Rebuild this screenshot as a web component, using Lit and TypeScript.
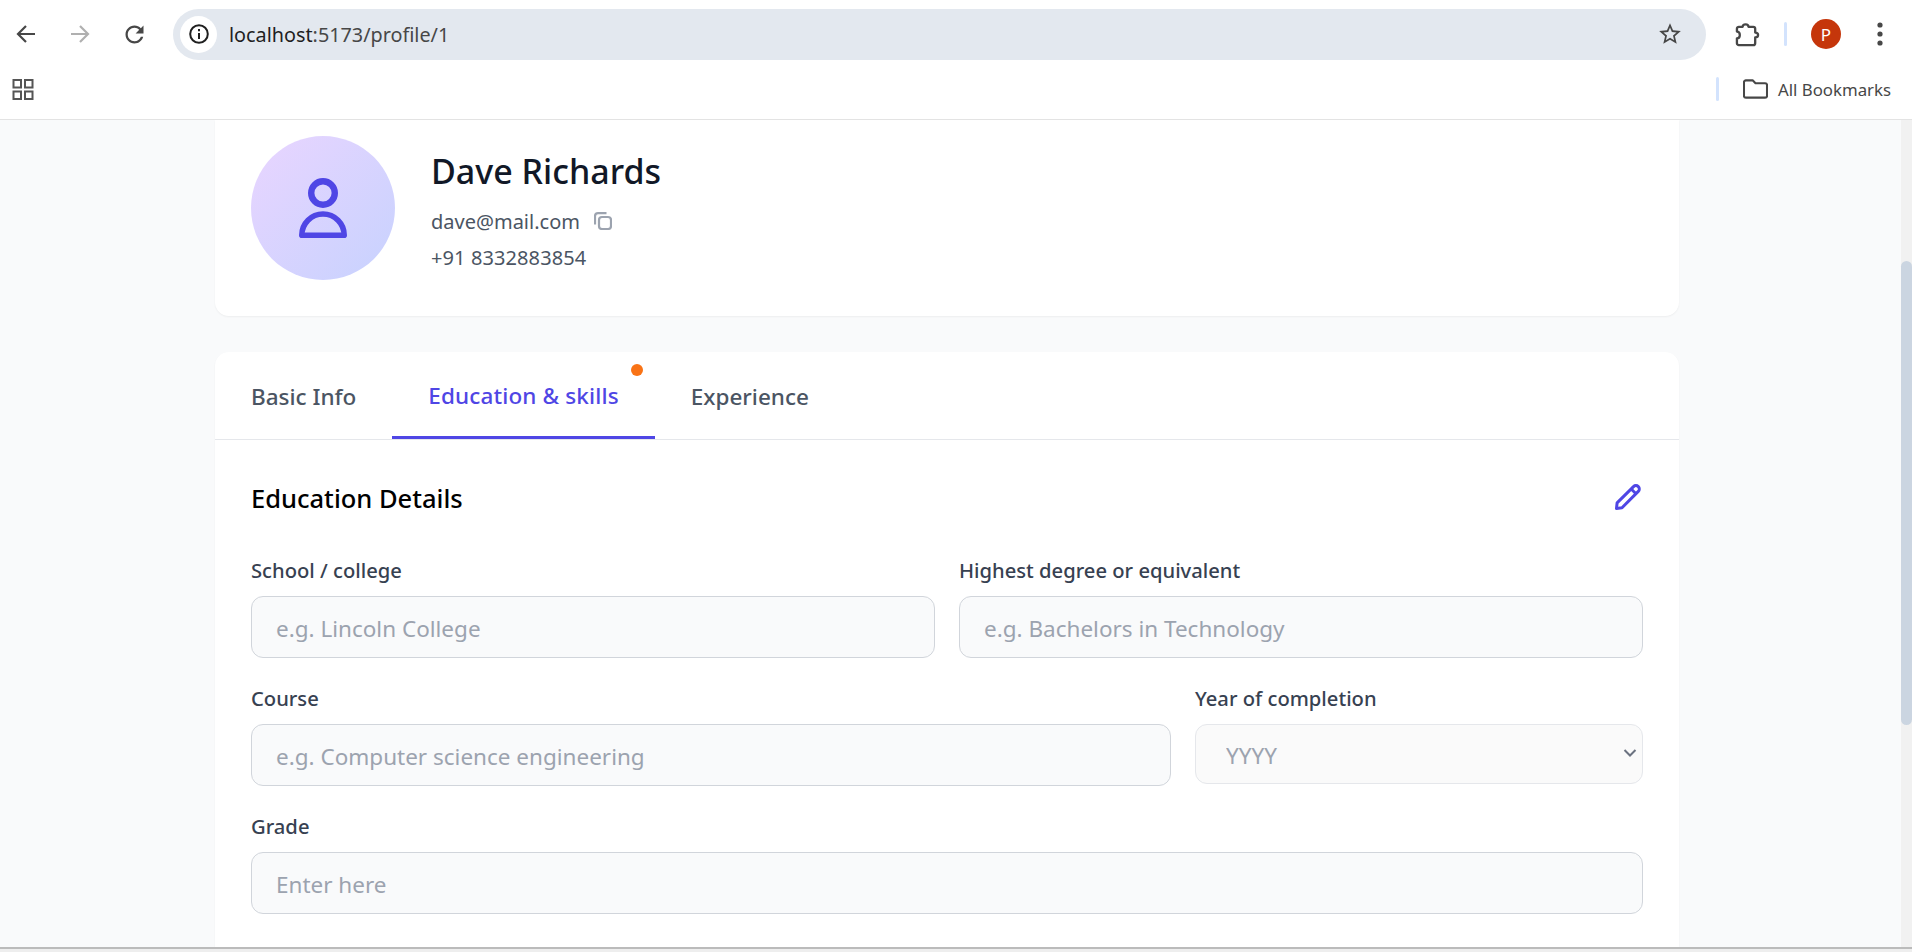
import { LitElement, html, css } from 'lit';
import { customElement, state } from 'lit/decorators.js';

interface Field {
  label: string;
  placeholder: string;
  span: number;
}

@customElement('app-root')
export class AppRoot extends LitElement {
  @state() private activeTab = 'Education & skills';

  private tabs = ['Basic Info', 'Education & skills', 'Experience'];

  private fields: Field[] = [
    { label: 'School / college', placeholder: 'e.g. Lincoln College', span: 3 },
    { label: 'Highest degree or equivalent', placeholder: 'e.g. Bachelors in Technology', span: 3 },
    { label: 'Course', placeholder: 'e.g. Computer science engineering', span: 4 },
  ];

  static styles = css`
    :host {
      display: flex;
      flex-direction: column;
      width: 1912px;
      height: 952px;
      overflow: hidden;
      font-family: 'Noto Sans', 'Open Sans', sans-serif;
      background: #fff;
    }
    svg { display: block; flex: none; }

    /* browser chrome */
    .toolbar {
      display: flex;
      align-items: center;
      height: 68px;
      flex: none;
    }
    .nav-btn {
      width: 52px;
      margin-left: 2px;
      display: flex;
      justify-content: center;
    }
    .nav-btn:first-child { margin-left: 0; }
    .omnibox {
      display: flex;
      align-items: center;
      width: 1533px;
      height: 51px;
      margin-left: 13px;
      border-radius: 26px;
      background: #e3e8ef;
      flex: none;
    }
    .site-info {
      width: 37px;
      height: 37px;
      margin-left: 7px;
      border-radius: 50%;
      background: #fff;
      display: flex;
      align-items: center;
      justify-content: center;
    }
    .url {
      margin-left: 12px;
      font-size: 19.8px;
      color: #474747;
      flex: 1;
    }
    .url b { font-weight: 400; color: #1f1f1f; }
    .star { margin-right: 23px; }
    .ext { margin-left: 29px; }
    .sep {
      width: 3px;
      height: 24px;
      background: #d3e3fd;
      border-radius: 2px;
      flex: none;
    }
    .toolbar .sep { margin-left: 24px; }
    .profile {
      width: 30px;
      height: 30px;
      margin-left: 24px;
      border-radius: 50%;
      background: #c5360b;
      color: #fff;
      font-size: 17px;
      display: flex;
      align-items: center;
      justify-content: center;
    }
    .menu { margin-left: 36px; }
    .bookmarks {
      display: flex;
      align-items: center;
      height: 52px;
      flex: none;
      padding: 0 21px 9px 12px;
      box-sizing: border-box;
      border-bottom: 1px solid #e3e3e3;
    }
    .bookmarks .sep { margin-left: auto; }
    .folder { margin-left: 24px; }
    .all {
      margin-left: 10px;
      font-size: 16.8px;
      color: #474747;
    }

    /* page */
    .viewport {
      flex: 1;
      min-height: 0;
      display: flex;
      background: #f9fafb;
    }
    .page {
      flex: 1;
      min-width: 0;
      overflow: hidden;
      padding-left: 215px;
    }
    .card {
      width: 1464px;
      background: #fff;
      border-radius: 14px;
      box-shadow: 0 1px 2px rgba(0, 0, 0, 0.05);
    }
    .profile-card {
      display: flex;
      gap: 36px;
      padding: 16px 36px 36px;
      box-sizing: border-box;
      border-radius: 0 0 14px 14px;
    }
    .avatar {
      width: 144px;
      height: 144px;
      border-radius: 50%;
      background: linear-gradient(135deg, #e9d5ff, #c7d2fe);
      display: flex;
      align-items: center;
      justify-content: center;
      flex: none;
    }
    .who { padding-top: 15px; }
    .name {
      font-size: 34px;
      line-height: 40px;
      font-weight: 500;
      color: #111827;
    }
    .email {
      display: flex;
      align-items: center;
      gap: 14px;
      margin-top: 17px;
      font-size: 20px;
      line-height: 28px;
      color: #4b5563;
    }
    .email svg { margin-top: -3px; }
    .phone {
      margin-top: 8px;
      font-size: 20px;
      letter-spacing: 0.1px;
      line-height: 28px;
      color: #4b5563;
    }
    .details-card { margin-top: 36px; }
    .tabs {
      display: flex;
      height: 88px;
      box-sizing: border-box;
      border-bottom: 1px solid #e5e7eb;
    }
    .tab {
      position: relative;
      display: flex;
      align-items: center;
      padding: 2px 36px 0;
      font-size: 22.5px;
      font-weight: 500;
      color: #4b5563;
    }
    .tab.active {
      color: #4f46e5;
      letter-spacing: 0.13px;
      border-bottom: 3px solid #4f46e5;
    }
    .dot {
      position: absolute;
      top: 12px;
      right: 12px;
      width: 12px;
      height: 12px;
      border-radius: 50%;
      background: #f97316;
    }
    .body { padding: 41px 36px 60px; }
    .head {
      display: flex;
      align-items: center;
      justify-content: space-between;
      height: 34px;
      margin-bottom: 41px;
    }
    .head h2 {
      margin: 0;
      font-size: 25.5px;
      font-weight: 500;
      color: #000;
    }
    .head svg { margin: -2px 2px 0 0; }
    .grid {
      display: grid;
      grid-template-columns: repeat(6, 1fr);
      column-gap: 24px;
      row-gap: 26px;
    }
    .field label {
      display: block;
      margin-bottom: 12px;
      font-size: 20.2px;
      line-height: 28px;
      font-weight: 500;
      color: #374151;
    }
    .field input,
    .field select {
      display: block;
      width: 100%;
      box-sizing: border-box;
      height: 62px;
      padding: 2px 24px 0;
      background: #f9fafb;
      border: 1px solid #d1d5db;
      border-radius: 12px;
      font: 400 22.5px 'Noto Sans', sans-serif;
      color: #111827;
      outline: none;
    }
    .field input::placeholder { color: #9ca3af; }
    .select-wrap { position: relative; }
    .field select {
      height: 60px;
      appearance: none;
      padding-left: 30px;
      background: #fafafa;
      border-color: #e5e7eb;
      color: #9ca3af;
    }
    .chevron {
      position: absolute;
      top: 24px;
      right: 6px;
    }

    /* scrollbar */
    .scrollbar {
      width: 11px;
      flex: none;
      background: #f1f1f1;
    }
    .thumb {
      height: 464px;
      margin-top: 141px;
      border-radius: 6px;
      background: #cbd5e1;
    }
    .status {
      height: 5px;
      flex: none;
      box-sizing: border-box;
      border-top: 2px solid #bbb;
      background: #eee;
    }
  `;

  private renderToolbar() {
    return html`
      <div class="toolbar">
        <div class="nav-btn">
          <svg width="22" height="22" viewBox="0 0 22 22" fill="none" stroke="#474747" stroke-width="2.2"><path d="M20 11H3M11 3l-8 8 8 8" /></svg>
        </div>
        <div class="nav-btn">
          <svg width="22" height="22" viewBox="0 0 22 22" fill="none" stroke="#b0b0b0" stroke-width="2.2"><path d="M2 11h17M11 3l8 8-8 8" /></svg>
        </div>
        <div class="nav-btn">
          <svg width="27" height="27" viewBox="0 0 24 24" fill="#474747"><path d="M17.65 6.35C16.2 4.9 14.21 4 12 4c-4.42 0-7.99 3.58-7.99 8s3.57 8 7.99 8c3.73 0 6.84-2.55 7.73-6h-2.08c-.82 2.33-3.04 4-5.65 4-3.31 0-6-2.69-6-6s2.69-6 6-6c1.66 0 3.14.69 4.22 1.78L13 11h7V4l-2.35 2.35z" /></svg>
        </div>
        <div class="omnibox">
          <div class="site-info">
            <svg width="22" height="22" viewBox="0 0 22 22" fill="none" stroke="#1f1f1f" stroke-width="2">
              <circle cx="11" cy="11" r="8.8" />
              <path d="M11 10v6M11 6v2.2" />
            </svg>
          </div>
          <div class="url"><b>localhost</b>:5173/profile/1</div>
          <svg class="star" width="26" height="26" viewBox="0 0 24 24" fill="#474747"><path d="M22 9.24l-7.19-.62L12 2 9.19 8.63 2 9.24l5.46 4.73L5.82 21 12 17.27 18.18 21l-1.63-7.03L22 9.24zM12 15.4l-3.76 2.27 1-4.28-3.32-2.88 4.38-.38L12 6.1l1.71 4.04 4.38.38-3.32 2.88 1 4.28L12 15.4z" /></svg>
        </div>
        <svg class="ext" width="25" height="25" viewBox="0 0 26 26" fill="none" stroke="#474747" stroke-width="2.4" stroke-linejoin="round"><path d="M4 5H8C8 1.5 14 1.5 14 5H19a2 2 0 0 1 2 2V11C25 11 25 16 21 16V22a2 2 0 0 1-2 2H4a2 2 0 0 1-2-2V17C6 17 6 10 2 10V7a2 2 0 0 1 2-2Z" /></svg>
        <div class="sep"></div>
        <div class="profile">P</div>
        <svg class="menu" width="6" height="24" viewBox="0 0 6 24" fill="#474747">
          <circle cx="3" cy="3" r="2.6" /><circle cx="3" cy="12" r="2.6" /><circle cx="3" cy="21" r="2.6" />
        </svg>
      </div>
    `;
  }

  private renderBookmarks() {
    return html`
      <div class="bookmarks">
        <svg width="22" height="21" viewBox="0 0 22 21" fill="none" stroke="#555" stroke-width="2">
          <rect x="1.5" y="1" width="7.5" height="7.5" />
          <rect x="13" y="1" width="7.5" height="7.5" />
          <rect x="1.5" y="12.5" width="7.5" height="7.5" />
          <rect x="13" y="12.5" width="7.5" height="7.5" />
        </svg>
        <div class="sep"></div>
        <svg class="folder" width="25" height="20" viewBox="0 0 26 20" fill="none" stroke="#474747" stroke-width="2.2" stroke-linejoin="round"><path d="M3 1H10L13 4H23a2 2 0 0 1 2 2V17a2 2 0 0 1-2 2H3a2 2 0 0 1-2-2V3a2 2 0 0 1 2-2Z" /></svg>
        <div class="all">All Bookmarks</div>
      </div>
    `;
  }

  private renderProfile() {
    return html`
      <section class="card profile-card">
        <div class="avatar">
          <svg width="56" height="66" viewBox="44 39 56 66" fill="none" stroke="#4f46e5" stroke-linejoin="round">
            <circle cx="72" cy="57" r="11.8" stroke-width="6.4" />
            <path d="M50.8 99.2a21.2 21.2 0 0 1 42.4 0z" stroke-width="5.6" />
          </svg>
        </div>
        <div class="who">
          <div class="name">Dave Richards</div>
          <div class="email">
            dave@mail.com
            <svg width="18" height="18" viewBox="0 0 18 18" fill="none" stroke="#9ca3af" stroke-width="2.2">
              <rect x="5" y="5" width="12" height="12" rx="3" />
              <path d="M12.5 1.2H4A3 3 0 0 0 1 4.2v8.3" />
            </svg>
          </div>
          <div class="phone">+91 8332883854</div>
        </div>
      </section>
    `;
  }

  private renderTabs() {
    return html`
      <div class="tabs">
        ${this.tabs.map(tab => html`
          <div class="tab ${tab === this.activeTab ? 'active' : ''}" @click=${() => { this.activeTab = tab; }}>
            ${tab}
            ${tab === 'Education & skills' ? html`<span class="dot"></span>` : ''}
          </div>
        `)}
      </div>
    `;
  }

  private renderForm() {
    return html`
      <div class="body">
        <div class="head">
          <h2>Education Details</h2>
          <svg width="27" height="27" viewBox="0 0 27 27" fill="none" stroke="#4f46e5" stroke-width="3" stroke-linejoin="round">
            <path d="M2.5 24.5l.6-5.6L19.5 2.6a3 3 0 0 1 4.8 4.8L8 23.8z" />
            <path d="M17.2 5l4.8 4.8" />
          </svg>
        </div>
        <div class="grid">
          ${this.fields.map(f => html`
            <div class="field" style="grid-column: span ${f.span}">
              <label>${f.label}</label>
              <input placeholder=${f.placeholder} />
            </div>
          `)}
          <div class="field" style="grid-column: span 2">
            <label>Year of completion</label>
            <div class="select-wrap">
              <select><option>YYYY</option></select>
              <svg class="chevron" width="14" height="10" viewBox="0 0 14 10" fill="none" stroke="#6b7280" stroke-width="2"><path d="M1.5 2l5.5 5.5L12.5 2" /></svg>
            </div>
          </div>
          <div class="field" style="grid-column: span 6">
            <label>Grade</label>
            <input placeholder="Enter here" />
          </div>
        </div>
      </div>
    `;
  }

  render() {
    return html`
      ${this.renderToolbar()}
      ${this.renderBookmarks()}
      <div class="viewport">
        <div class="page">
          ${this.renderProfile()}
          <section class="card details-card">
            ${this.renderTabs()}
            ${this.renderForm()}
          </section>
        </div>
        <div class="scrollbar"><div class="thumb"></div></div>
      </div>
      <div class="status"></div>
    `;
  }
}
